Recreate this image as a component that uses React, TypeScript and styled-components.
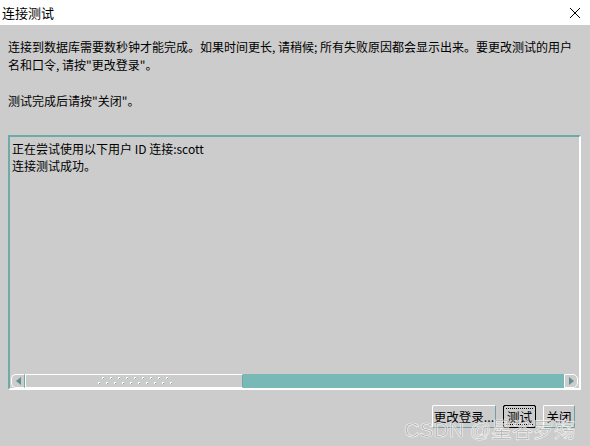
import React from "react";
import styled, { createGlobalStyle } from "styled-components";

const Global = createGlobalStyle`
  html, body { margin: 0; padding: 0; }
  body {
    width: 590px; height: 446px; overflow: hidden;
    background: #cccccc;
    font-family: "Noto Sans CJK SC", "Liberation Sans", sans-serif;
  }
`;

const Window = styled.div`
  position: relative;
  width: 590px;
  height: 446px;
  display: flex;
  flex-direction: column;
  background: #cccccc;
  color: #000;
`;

const TitleBar = styled.div`
  height: 25px;
  flex: none;
  background: #ffffff;
  display: flex;
  align-items: center;
  justify-content: space-between;
  padding: 0 8px 0 2px;
`;

const Title = styled.span`
  font-size: 13px;
  line-height: 14px;
  color: #000;
`;

const Close = styled.svg`
  width: 12px;
  height: 12px;
  margin-right: 1px;
`;

const Body = styled.div`
  flex: 1;
  display: flex;
  flex-direction: column;
  padding: 13px 9px 0 8px;
`;

const Para = styled.div`
  font-size: 12px;
  line-height: 18px;
  white-space: nowrap;
`;

const Spacer = styled.div<{ h: number }>`
  height: ${(p) => p.h}px;
  flex: none;
`;

const Panel = styled.div`
  height: 255px;
  flex: none;
  box-sizing: border-box;
  border-top: 2px solid #6faaa8;
  border-left: 2px solid #6faaa8;
  border-right: 2px solid #ffffff;
  border-bottom: 2px solid #ffffff;
  border-top-right-radius: 2px;
  border-bottom-left-radius: 2px;
  display: flex;
  flex-direction: column;
  padding: 3px 0 0 1px;
`;

const Output = styled.div`
  flex: 1;
  font-size: 12px;
  line-height: 17px;
  padding-left: 1px;
`;

const ScrollBar = styled.div`
  height: 14px;
  display: flex;
  margin-right: 1px;
`;

const ArrowBtn = styled.div<{ side: "l" | "r" }>`
  width: 14px;
  box-sizing: border-box;
  background: #cccccc;
  border: 1px solid #ffffff;
  border-${(p) => (p.side === "l" ? "top-left" : "bottom-right")}-radius: 5px;
  border-${(p) => (p.side === "l" ? "bottom-left" : "top-right")}-radius: 5px;
  display: flex;
  align-items: center;
  justify-content: center;
  ${(p) => (p.side === "l" ? "border-right-color:#6faaa8;" : "border-left-color:#ffffff;")}
`;

const Thumb = styled.div`
  width: 218px;
  box-sizing: border-box;
  border: 1px solid #ffffff;
  border-right-color: #6faaa8;
  background: #cccccc;
  display: flex;
  align-items: center;
  justify-content: center;
  padding-left: 8px;
`;

const Track = styled.div`
  flex: 1;
  background: #78b9b7;
`;

const Footer = styled.div`
  display: flex;
  justify-content: flex-end;
  align-items: center;
  gap: 7px;
  padding: 15px 6px 0 0;
`;

const Button = styled.button<{ primary?: boolean; w: number }>`
  width: ${(p) => p.w}px;
  height: 23px;
  box-sizing: border-box;
  padding: 0;
  margin: 0;
  background: #cccccc;
  font-family: "Noto Sans CJK SC", "Liberation Sans", sans-serif;
  font-size: 12.5px;
  white-space: nowrap;
  overflow: visible;
  display: flex;
  align-items: center;
  justify-content: center;
  color: #000;
  border: 1px solid;
  border-color: #ffffff #6f9f9e #6f9f9e #ffffff;
  border-radius: 2px;
  ${(p) =>
    p.primary
      ? `outline: 1px solid #000; outline-offset: -1px; border-color:#000;`
      : ""}
`;

const Focus = styled.span`
  display: inline-block;
  border-top: 1px dotted #000;
  border-bottom: 1px dotted #000;
  padding: 0 1px;
  line-height: 15px;
`;

const Watermark = styled.div`
  position: absolute;
  right: 15px;
  bottom: 3px;
  font-family: "Liberation Sans", "Noto Sans CJK SC", sans-serif;
  font-size: 21px;
  line-height: 26px;
  color: rgba(140, 140, 140, 0.55);
  -webkit-text-stroke: 0.7px rgba(255, 255, 255, 0.85);
  pointer-events: none;
`;

const Grip = () => (
  <svg width="80" height="8" viewBox="0 0 80 8">
    {Array.from({ length: 9 }).map((_, i) => (
      <rect key={"a" + i} x={4 + i * 8} y={0} width={2} height={2} fill="#ffffff" />
    ))}
    {Array.from({ length: 10 }).map((_, i) => (
      <rect key={"b" + i} x={0 + i * 8} y={5} width={2} height={2} fill="#ffffff" />
    ))}
    {Array.from({ length: 9 }).map((_, i) => (
      <rect key={"c" + i} x={5 + i * 8} y={1} width={1} height={1} fill="#6faaa8" />
    ))}
    {Array.from({ length: 10 }).map((_, i) => (
      <rect key={"d" + i} x={1 + i * 8} y={6} width={1} height={1} fill="#6faaa8" />
    ))}
  </svg>
);

export default function App() {
  return (
    <Window>
      <Global />
      <TitleBar>
        <Title>连接测试</Title>
        <Close viewBox="0 0 12 12">
          <path d="M1 1 L11 11 M11 1 L1 11" stroke="#000" strokeWidth="1" />
        </Close>
      </TitleBar>
      <Body>
        <Para>
          连接到数据库需要数秒钟才能完成。如果时间更长, 请稍候; 所有失败原因都会显示出来。要更改测试的用户
        </Para>
        <Para>名和口令, 请按"更改登录"。</Para>
        <Spacer h={18} />
        <Para>测试完成后请按"关闭"。</Para>
        <Spacer h={25} />
        <Panel>
          <Output>
            正在尝试使用以下用户 ID 连接:scott
            <br />
            连接测试成功。
          </Output>
          <ScrollBar>
            <ArrowBtn side="l">
              <svg width="5" height="8" viewBox="0 0 5 8">
                <path d="M5 0 L0 4 L5 8 Z" fill="#5f8f8f" />
              </svg>
            </ArrowBtn>
            <Thumb>
              <Grip />
            </Thumb>
            <Track />
            <ArrowBtn side="r">
              <svg width="5" height="8" viewBox="0 0 5 8">
                <path d="M0 0 L5 4 L0 8 Z" fill="#5f8f8f" />
              </svg>
            </ArrowBtn>
          </ScrollBar>
        </Panel>
        <Footer>
          <Button w={64}>更改登录...</Button>
          <Button w={33} primary>
            <Focus>测试</Focus>
          </Button>
          <Button w={32}>关闭</Button>
        </Footer>
      </Body>
      <Watermark>CSDN @星谷罗殇</Watermark>
    </Window>
  );
}
